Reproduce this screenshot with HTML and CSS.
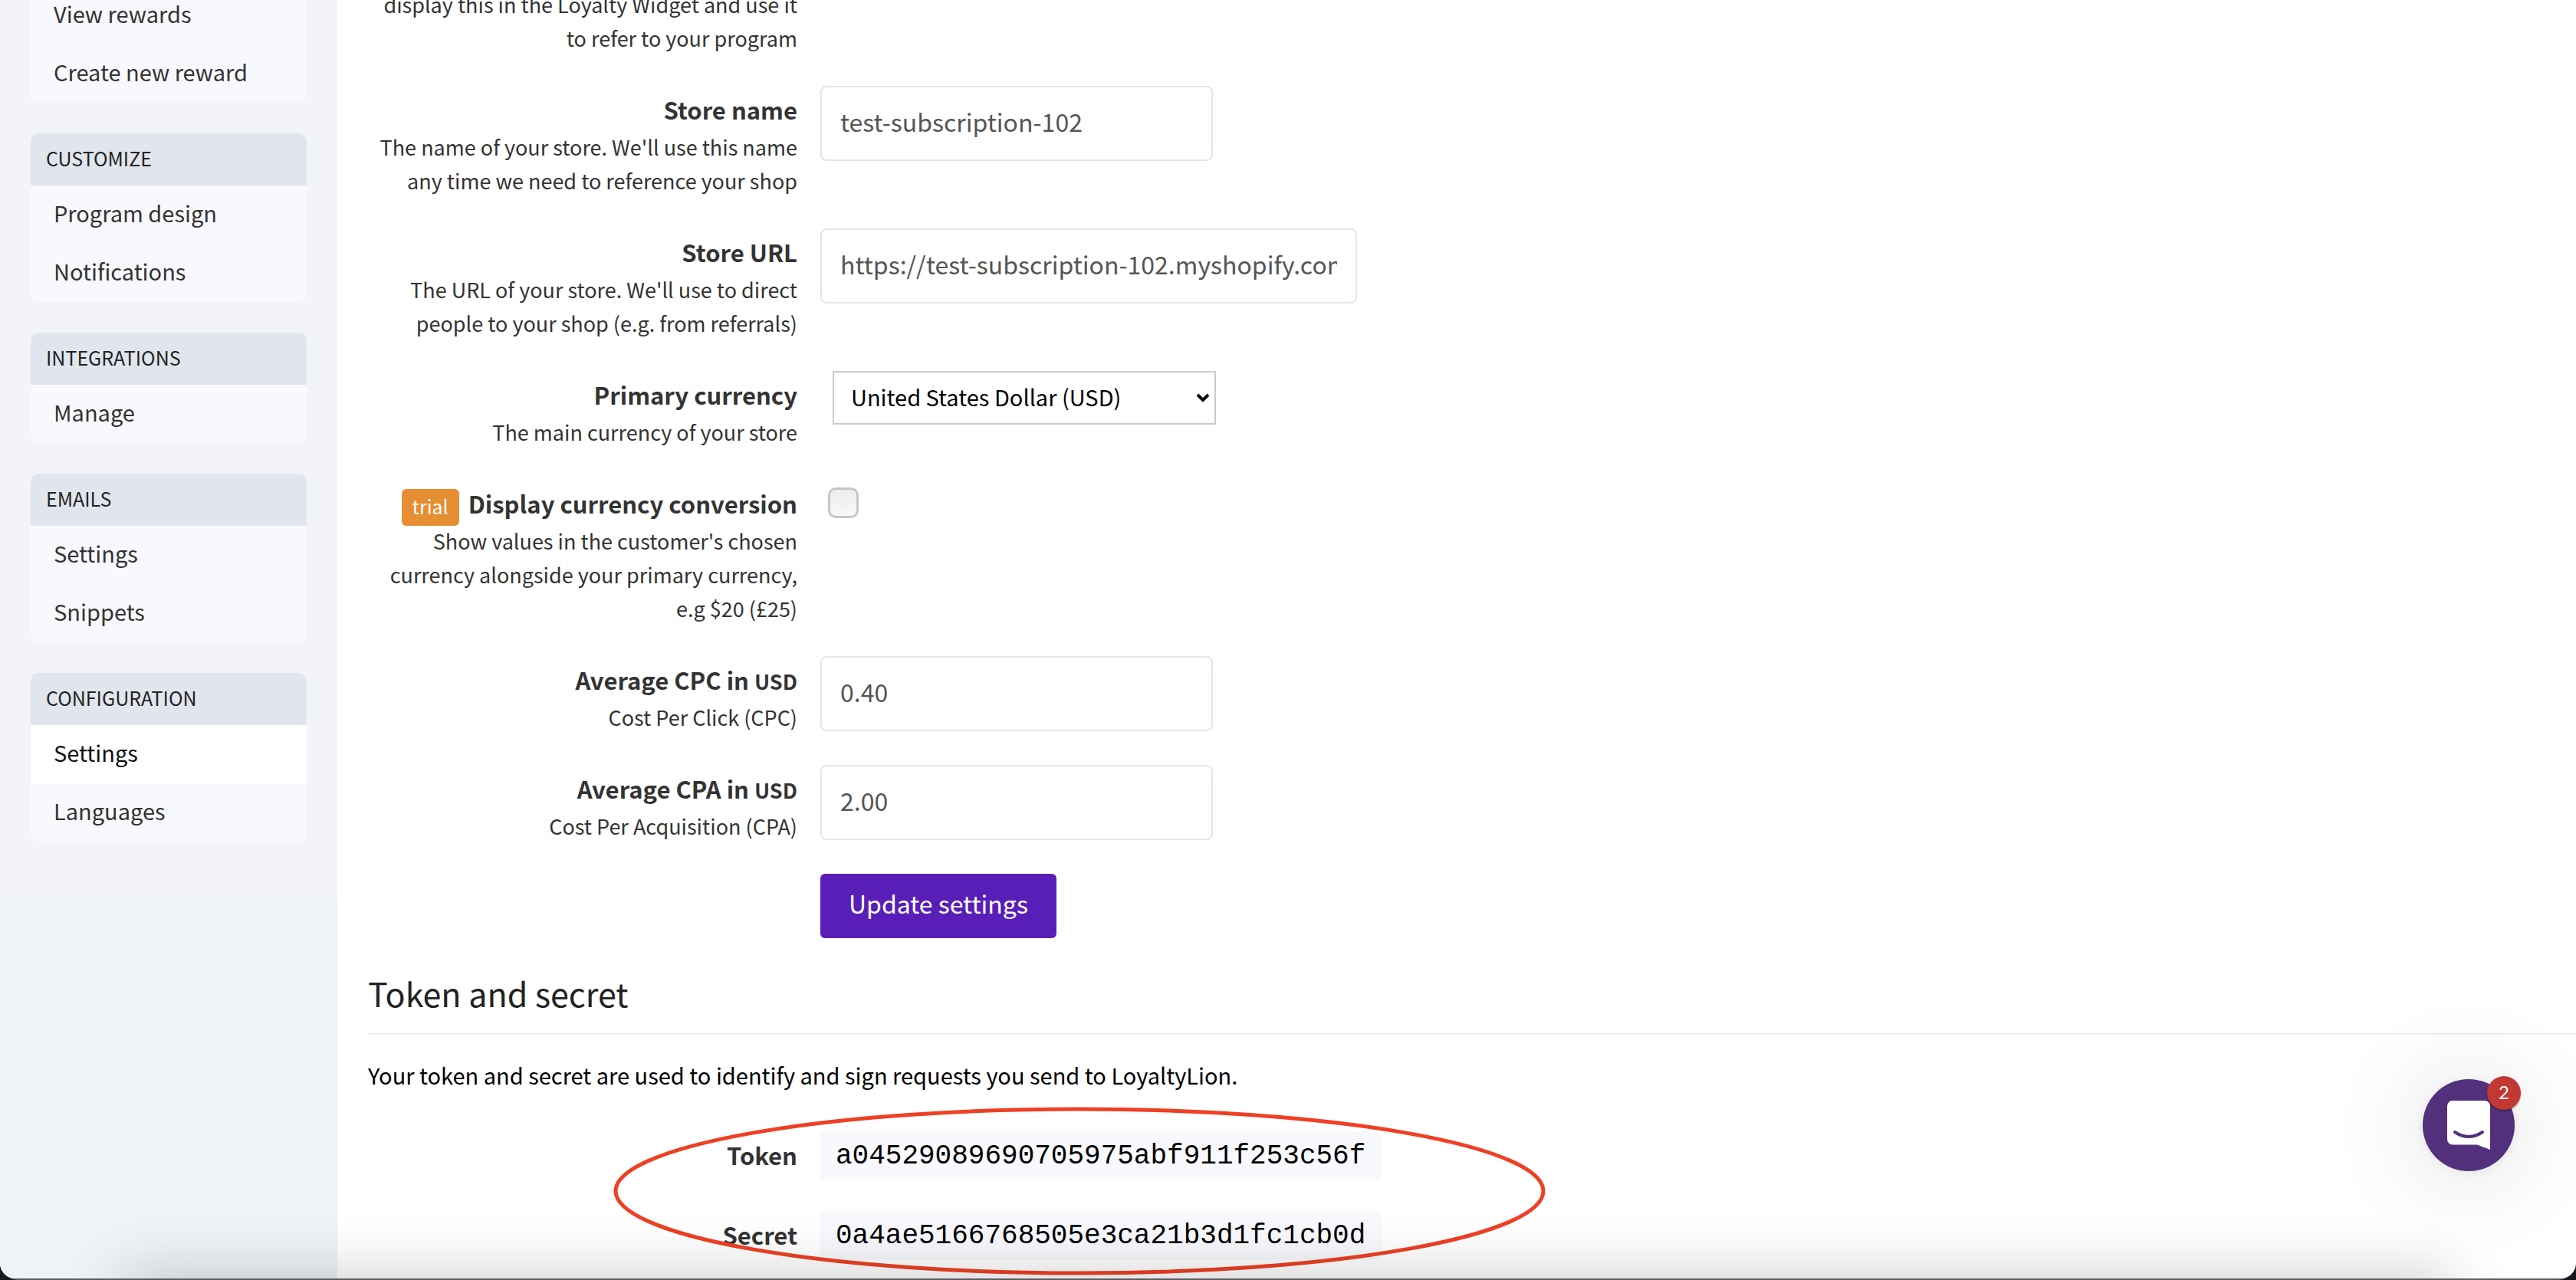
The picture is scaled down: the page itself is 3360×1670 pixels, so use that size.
FILE: index.html
```html
<!DOCTYPE html>
<html lang="en">
<head>
<meta charset="utf-8">
<title>Settings</title>
<link rel="stylesheet" href="styles.css">
</head>
<body>
<div class="frame">
  <div class="window">
    <aside class="sidebar">
      <nav class="menu">
        <section class="menu-group">
          <a class="menu-item" href="#">View rewards</a>
          <a class="menu-item" href="#">Create new reward</a>
        </section>
        <section class="menu-group">
          <h2 class="menu-title">Customize</h2>
          <a class="menu-item" href="#">Program design</a>
          <a class="menu-item" href="#">Notifications</a>
        </section>
        <section class="menu-group">
          <h2 class="menu-title">Integrations</h2>
          <a class="menu-item" href="#">Manage</a>
        </section>
        <section class="menu-group">
          <h2 class="menu-title">Emails</h2>
          <a class="menu-item" href="#">Settings</a>
          <a class="menu-item" href="#">Snippets</a>
        </section>
        <section class="menu-group">
          <h2 class="menu-title">Configuration</h2>
          <a class="menu-item active" href="#">Settings</a>
          <a class="menu-item" href="#">Languages</a>
        </section>
      </nav>
    </aside>

    <main class="content">
      <form class="settings">
        <div class="row">
          <div class="row-label"><p class="hint">display this in the Loyalty Widget and use it<br>to refer to your program</p></div>
        </div>
        <div class="row">
          <div class="row-label">
            <label class="name" for="store-name">Store name</label>
            <p class="hint">The name of your store. We'll use this name any time we need to reference your shop</p>
          </div>
          <input class="field" id="store-name" type="text" value="test-subscription-102">
        </div>
        <div class="row">
          <div class="row-label">
            <label class="name" for="store-url">Store URL</label>
            <p class="hint">The URL of your store. We'll use to direct people to your shop (e.g. from referrals)</p>
          </div>
          <input class="field wide" id="store-url" type="text" value="https://test-subscription-102.myshopify.com">
        </div>
        <div class="row">
          <div class="row-label">
            <label class="name" for="currency">Primary currency</label>
            <p class="hint">The main currency of your store</p>
          </div>
          <div class="select-wrap">
            <select class="select" id="currency"><option>United States Dollar (USD)</option></select>
            <svg class="chevron" viewBox="0 0 18 12" aria-hidden="true"><path d="M2 2l7 7 7-7" fill="none" stroke="#000" stroke-width="4"/></svg>
          </div>
        </div>
        <div class="row">
          <div class="row-label">
            <label class="name" for="conversion"><span class="tag">trial</span>Display currency conversion</label>
            <p class="hint">Show values in the customer's chosen currency alongside your primary currency, e.g $20 (£25)</p>
          </div>
          <input class="check" id="conversion" type="checkbox">
        </div>
        <div class="row">
          <div class="row-label">
            <label class="name" for="cpc">Average CPC in <small class="unit">USD</small></label>
            <p class="hint">Cost Per Click (CPC)</p>
          </div>
          <input class="field" id="cpc" type="text" value="0.40">
        </div>
        <div class="row">
          <div class="row-label">
            <label class="name" for="cpa">Average CPA in <small class="unit">USD</small></label>
            <p class="hint">Cost Per Acquisition (CPA)</p>
          </div>
          <input class="field" id="cpa" type="text" value="2.00">
        </div>
        <div class="row">
          <div class="row-label"></div>
          <button class="submit" type="button">Update settings</button>
        </div>
      </form>

      <h1 class="heading">Token and secret</h1>
      <p class="intro">Your token and secret are used to identify and sign requests you send to LoyaltyLion.</p>
      <div class="keys-wrap">
        <dl class="keys">
          <dt class="key-name">Token</dt>
          <dd class="key-value"><code class="code">a04529089690705975abf911f253c56f</code></dd>
          <dt class="key-name">Secret</dt>
          <dd class="key-value"><code class="code">0a4ae5166768505e3ca21b3d1fc1cb0d</code></dd>
        </dl>
        <svg class="ring" viewBox="0 0 1216 220" aria-hidden="true"><ellipse cx="608" cy="110" rx="605" ry="107" fill="none" stroke="#ee4024" stroke-width="5"/></svg>
      </div>
    </main>

    <div class="dock-shadow"></div>

    <button class="chat" type="button" aria-label="Open chat">
      <svg class="chat-icon" viewBox="0 0 56 64" aria-hidden="true">
        <path d="M7 0H49a7 7 0 0 1 7 7V64L39 57.500H7a7 7 0 0 1-7-7V7a7 7 0 0 1 7-7z" fill="#fff"/>
        <path d="M10 41Q28 53 46 41" fill="none" stroke="#52307c" stroke-width="4" stroke-linecap="round"/>
      </svg>
      <span class="chat-count">2</span>
    </button>
  </div>
</div>
</body>
</html>
```
FILE: styles.css
```css
* { box-sizing: border-box; }

body {
  margin: 0;
  background: #15181e;
  color: #333;
  font-family: "Noto Sans CJK SC", "Noto Sans", sans-serif;
  font-size: 27px;
  overflow: hidden;
}

h1, h2, p, dl, dd { margin: 0; }

.frame {
  height: 100vh;
  padding-bottom: 2px;
  background: #5d5b5e;
  border-radius: 0 0 24px 24px;
}

.window {
  position: relative;
  display: flex;
  height: 100%;
  overflow: hidden;
  background: #fff;
  border-radius: 0 0 20px 20px;
}

/* Sidebar */
.sidebar {
  flex: 0 0 440px;
  background: #eff3f7;
}

.menu {
  display: flex;
  flex-direction: column;
  gap: 40px;
  margin-top: -18px;
  padding: 0 40px 74px;
  background: #f2f4f8;
}

.menu-group {
  overflow: hidden;
  background: #f8f9fc;
  border-radius: 10px;
}

.menu-title {
  height: 68px;
  padding: 0 20px;
  background: #e1e6ee;
  color: #222;
  font-size: 25px;
  font-weight: 400;
  line-height: 64px;
  text-transform: uppercase;
}

.menu-item {
  display: block;
  height: 76px;
  padding: 0 30px;
  color: #333;
  font-size: 29px;
  line-height: 70px;
  text-decoration: none;
}

.menu-item.active {
  background: #fff;
  color: #111;
}

/* Settings form */
.content {
  flex: 1;
  padding-left: 40px;
}

.settings { margin-top: -16px; }

.row {
  display: flex;
  gap: 30px;
  align-items: flex-start;
  margin-bottom: 40px;
}

.row-label {
  flex: 0 0 560px;
  text-align: right;
}

.name {
  display: block;
  height: 58px;
  font-size: 31px;
  font-weight: 700;
  line-height: 62px;
}

.unit { font-size: 27px; }

.hint {
  padding-left: 10px;
  line-height: 44px;
}

.tag {
  display: inline-block;
  height: 48px;
  margin-right: 12px;
  padding: 0 14px;
  background: #e58e34;
  border-radius: 6px;
  color: #fff;
  font-size: 25px;
  font-weight: 400;
  line-height: 44px;
  vertical-align: middle;
}

.field {
  width: 512px;
  height: 98px;
  padding: 0 24px 6px;
  background: #fff;
  border: 2px solid #e1e7e6;
  border-radius: 8px;
  color: #555;
  font-family: inherit;
  font-size: 32px;
}

.field.wide { width: 700px; }

.select-wrap {
  position: relative;
  margin-left: 16px;
}

.select {
  display: block;
  width: 500px;
  height: 70px;
  padding: 0 22px 4px;
  appearance: none;
  background: #fff;
  border: 2px solid #ccc;
  border-radius: 0;
  color: #000;
  font-family: inherit;
  font-size: 29px;
}

.chevron {
  position: absolute;
  top: 29px;
  right: 8px;
  width: 18px;
  height: 12px;
}

.check {
  width: 40px;
  height: 40px;
  margin: 10px;
  appearance: none;
  background: linear-gradient(#ededed, #f7f7f7);
  border: 3px solid #c6c6c6;
  border-radius: 10px;
}

.submit {
  height: 84px;
  padding: 0 37px 8px;
  background: #5a1eb8;
  border: 0;
  border-radius: 6px;
  color: #fff;
  font-family: inherit;
  font-size: 32px;
}

/* Token and secret */
.heading {
  height: 86px;
  border-bottom: 2px solid #eee;
  color: #222;
  font-size: 43px;
  font-weight: 400;
  line-height: 62px;
}

.intro {
  padding: 30px 0 52px;
  color: #000;
  font-size: 29px;
  line-height: 44px;
}

.keys-wrap { position: relative; }

.keys {
  display: grid;
  grid-template-columns: 560px 1fr;
  gap: 40px 30px;
}

.key-name {
  font-size: 31px;
  font-weight: 700;
  line-height: 62px;
  text-align: right;
}

.code {
  display: inline-block;
  height: 64px;
  padding: 0 20px;
  background: #f8f9fc;
  border-radius: 6px;
  color: #000;
  font-family: "Liberation Mono", monospace;
  font-size: 36px;
  line-height: 66px;
  vertical-align: top;
}

/* Highlight drawn over the key pair */
.ring {
  position: absolute;
  top: -32px;
  left: 320px;
  width: 1216px;
  height: 220px;
}

/* Shade that the dock throws on the lower edge */
.dock-shadow {
  position: absolute;
  right: 160px;
  bottom: -60px;
  left: 160px;
  height: 60px;
  box-shadow: 0 0 80px rgba(0, 0, 0, 0.24);
}

.chat {
  position: absolute;
  right: 80px;
  bottom: 140px;
  display: grid;
  place-items: center;
  width: 120px;
  height: 120px;
  padding: 0;
  background: #52307c;
  border: 0;
  border-radius: 50%;
  box-shadow: 0 2px 12px rgba(0, 0, 0, 0.06), 0 4px 130px rgba(0, 0, 0, 0.16);
}

.chat-icon {
  width: 56px;
  height: 64px;
}

.chat-count {
  position: absolute;
  top: -4px;
  right: -8px;
  width: 44px;
  height: 44px;
  background: #c23833;
  border-radius: 50%;
  box-shadow: 0 2px 2px rgba(0, 0, 0, 0.3);
  color: #fff;
  font-family: Lato, sans-serif;
  font-size: 24px;
  line-height: 42px;
}
```
